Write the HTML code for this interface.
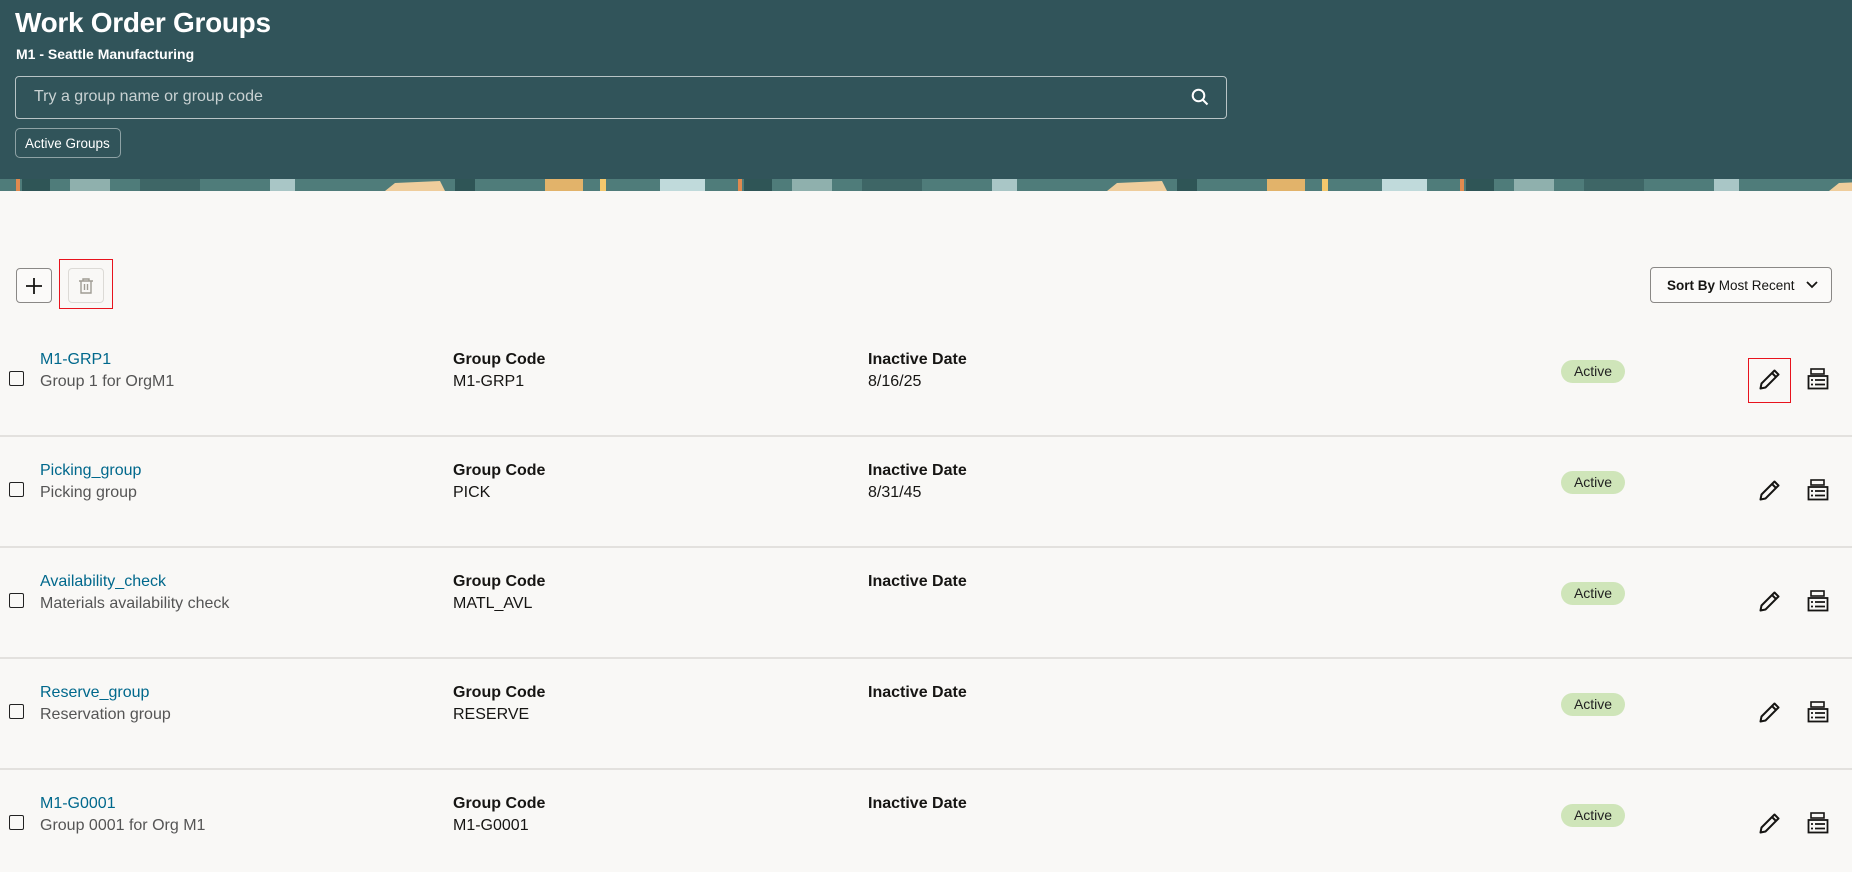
<!DOCTYPE html>
<html><head><meta charset="utf-8"><style>
*{box-sizing:border-box;margin:0;padding:0}
body{width:1852px;height:872px;overflow:hidden;background:#f9f8f6;font-family:"Liberation Sans",sans-serif;color:#161513;position:relative}
.hdr{position:absolute;left:0;top:0;width:1852px;height:179px;background:#31545a}
.strip{position:absolute;left:0;top:179px;width:1852px;height:12px;overflow:hidden}
.abs{position:absolute}
h1{position:absolute;left:15px;top:7px;font-size:28px;font-weight:bold;color:#fff;letter-spacing:-0.3px}
.sub{left:16px;top:46px;font-size:14px;font-weight:bold;color:#fff}
.search{left:15px;top:76px;width:1212px;height:43px;border:1px solid #b8c4c6;border-radius:4px;color:#c9d2d3;font-size:16px;padding:11px 18px}
.chip{left:15px;top:128px;width:106px;height:30px;border:1px solid #8ea2a5;border-radius:5px;color:#fff;font-size:13.5px;padding:7px 0 0 9px}
.btn{border:1px solid #8a8886;border-radius:4px;background:#fbfaf9}
.red{border:1px solid #e8131d}
.sep{left:0;width:1852px;height:2px;background:#e3e1de}
.cb{width:15px;height:15px;border:1.5px solid #222;border-radius:2px}
.nm{font-size:16px;color:#00688c}
.ds{font-size:16px;color:#555}
.lb{font-size:16px;font-weight:bold}
.vl{font-size:16px}
.badge{width:64px;height:23px;border-radius:12px;background:#cfe5b9;font-size:14px;text-align:center;line-height:23px;color:#222}
</style></head><body>
<div class="hdr"></div>
<svg class="strip" width="1852" height="12" viewBox="0 0 1852 12">
<defs><pattern id="p" width="722" height="12" patternUnits="userSpaceOnUse">
<rect width="722" height="12" fill="#4f7c7a"/>
<rect x="16" y="0" width="4" height="12" fill="#e08a4f"/>
<rect x="22" y="0" width="28" height="12" fill="#2f5556"/>
<rect x="70" y="0" width="40" height="12" fill="#8fb0ad"/>
<rect x="140" y="0" width="60" height="12" fill="#3e6666"/>
<rect x="270" y="0" width="25" height="12" fill="#a9c6c6"/>
<path d="M385 12 L395 4 L440 2 L445 12Z" fill="#efcd9c"/>
<rect x="455" y="0" width="20" height="12" fill="#2f5556"/>
<rect x="545" y="0" width="38" height="12" fill="#e2b36a"/>
<rect x="600" y="0" width="6" height="12" fill="#f3c86d"/>
<rect x="660" y="0" width="45" height="12" fill="#c0dadb"/>
</pattern></defs>
<rect width="1852" height="12" fill="url(#p)"/></svg>
<h1>Work Order Groups</h1>
<div class="abs sub">M1 - Seattle Manufacturing</div>
<div class="abs search">Try a group name or group code</div>
<svg class="abs" style="left:1191px;top:88px" width="18" height="18" viewBox="0 0 18 18"><circle cx="7.5" cy="7.5" r="5.8" fill="none" stroke="#fff" stroke-width="2"/><path d="M12 12 L16.5 16.5" stroke="#fff" stroke-width="2"/></svg>
<div class="abs chip">Active Groups</div>

<div class="abs btn" style="left:16px;top:268px;width:36px;height:35px"></div>
<svg class="abs" style="left:24px;top:276px" width="20" height="20"><path d="M10 2V18M2 10H18" stroke="#161513" stroke-width="1.8"/></svg>
<div class="abs red" style="left:59px;top:259px;width:54px;height:50px"></div>
<div class="abs" style="left:68px;top:268px;width:36px;height:35px;border:1px solid #dcdad6;border-radius:4px"></div>
<svg class="abs" style="left:76px;top:276px" width="20" height="20" viewBox="0 0 20 20"><path d="M3 5H17M7 5V3H13V5M5 5V17H15V5M8.5 8V14M11.5 8V14" fill="none" stroke="#a09c94" stroke-width="1.4"/></svg>

<div class="abs btn" style="left:1650px;top:267px;width:182px;height:36px;padding:10px 0 0 16px;font-size:13.5px"><b>Sort By</b> Most Recent</div>
<svg class="abs" style="left:1806px;top:280px" width="12" height="10"><path d="M1 2L6 7L11 2" fill="none" stroke="#161513" stroke-width="1.8"/></svg>

<div class="abs red" style="left:1748px;top:358px;width:43px;height:45px"></div>

<div id="rows"></div>
<script>
var d=[["M1-GRP1","Group 1 for OrgM1","M1-GRP1","8/16/25"],["Picking_group","Picking group","PICK","8/31/45"],["Availability_check","Materials availability check","MATL_AVL",""],["Reserve_group","Reservation group","RESERVE",""],["M1-G0001","Group 0001 for Org M1","M1-G0001",""]];
var h="";
d.forEach(function(r,i){var t=i*111;
h+='<div class="abs cb" style="left:9px;top:'+(371+t)+'px"></div>';
h+='<div class="abs nm" style="left:40px;top:'+(351+t)+'px">'+r[0]+'</div>';
h+='<div class="abs ds" style="left:40px;top:'+(373+t)+'px">'+r[1]+'</div>';
h+='<div class="abs lb" style="left:453px;top:'+(351+t)+'px">Group Code</div>';
h+='<div class="abs vl" style="left:453px;top:'+(373+t)+'px">'+r[2]+'</div>';
h+='<div class="abs lb" style="left:868px;top:'+(351+t)+'px">Inactive Date</div>';
h+='<div class="abs vl" style="left:868px;top:'+(373+t)+'px">'+r[3]+'</div>';
h+='<div class="abs badge" style="left:1561px;top:'+(360+t)+'px">Active</div>';
h+='<svg class="abs" style="left:1757px;top:'+(366+t)+'px" width="26" height="26" viewBox="0 0 26 26"><path d="M3.5 22.5L4.5 17.5L17.5 4.5L21.5 8.5L8.5 21.5Z M15 7L19 11" fill="none" stroke="#161513" stroke-width="2" stroke-linejoin="round"/></svg>';
h+='<svg class="abs" style="left:1807px;top:'+(368+t)+'px" width="22" height="22" viewBox="0 0 22 22"><rect x="4" y="1" width="13" height="5" fill="none" stroke="#161513" stroke-width="1.6"/><rect x="1.5" y="8" width="19" height="12.5" fill="none" stroke="#161513" stroke-width="1.8"/><path d="M4 12H6M8 12H18M4 16.5H6M8 16.5H18" stroke="#161513" stroke-width="1.8"/></svg>';
if(i<4)h+='<div class="abs sep" style="top:'+(435+t)+'px"></div>';
});
document.getElementById("rows").innerHTML=h;
</script>
</body></html>
